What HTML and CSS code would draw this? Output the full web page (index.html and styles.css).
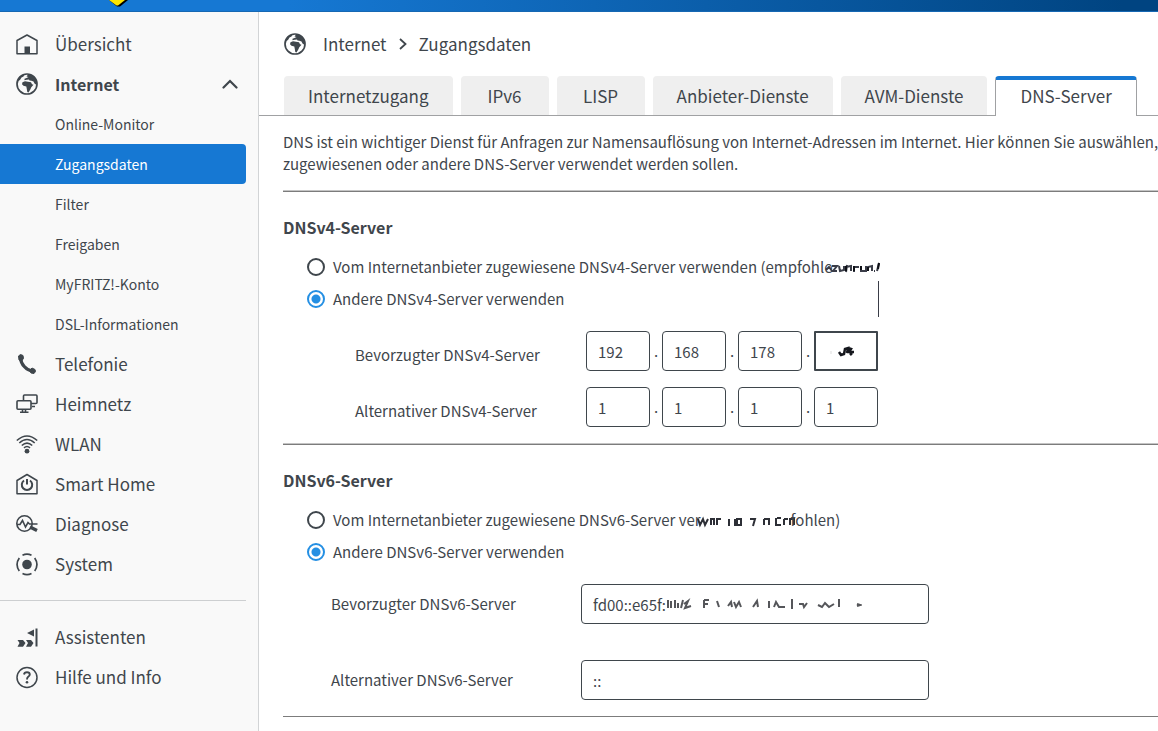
FILE: index.html
```html
<!DOCTYPE html>
<html lang="de">
<head>
<meta charset="utf-8">
<title>Zugangsdaten – DNS-Server</title>
<link rel="stylesheet" href="styles.css">
</head>
<body>
<svg class="defs" aria-hidden="true">
  <symbol id="globe" viewBox="0 0 24 24">
    <circle cx="12" cy="12" r="10" fill="none" stroke="currentColor" stroke-width="1.7"/>
    <path fill="currentColor" d="M2.500 9.500 5 4.500 9.500 2.500 8.500 4.500 6.500 5.500 5 8ZM13 2.500 17 3 20.500 6.500 22 11 21.500 13 19.500 11.500 18.500 9.500 16.500 8.800 14.500 8.600 14 7.600 11.800 7.800 9.500 8.300 9.500 6.800 11.500 6 13.500 5 11.500 4.500ZM7.500 10.200 10 9.200 13 9.800 16 10.200 17 12.300 18.500 12.700 16.300 15.200 15.300 17.500 13.500 20.500 12.300 20 11.800 17 11.300 14.500 8.500 13.800 7 12.200Z"/>
  </symbol>
</svg>
<header class="topbar">
  <svg class="logo" viewBox="0 0 24 8" aria-hidden="true"><path d="M1 0H20L12 6.500H9Z" fill="#000"/><path d="M1 0H17L10 5.500H8.500Z" fill="#ffe600"/></svg>
</header>
<div class="layout">
  <nav class="sidebar" aria-label="Hauptmenü">
    <a class="item" href="#"><svg class="icon" viewBox="0 0 24 24"><path d="M2 8.500 12 3 22 8.500V21.800H2Z" fill="none" stroke="currentColor" stroke-width="1.500" stroke-linejoin="round"/><path d="M9.500 14.500h5.500v7h-5.500z" fill="currentColor"/></svg>Übersicht</a>
    <a class="item open" href="#"><svg class="icon"><use href="#globe"/></svg>Internet<svg class="chevron" viewBox="0 0 16 10"><path d="M1.500 8.500 8 2l6.500 6.500" fill="none" stroke="currentColor" stroke-width="2.200" stroke-linecap="round"/></svg></a>
    <a class="item sub" href="#">Online-Monitor</a>
    <a class="item sub active" href="#" aria-current="page">Zugangsdaten</a>
    <a class="item sub" href="#">Filter</a>
    <a class="item sub" href="#">Freigaben</a>
    <a class="item sub" href="#">MyFRITZ!-Konto</a>
    <a class="item sub" href="#">DSL-Informationen</a>
    <a class="item" href="#"><svg class="icon" viewBox="0 0 24 24"><path d="M5.500 6C6 12 11 18.500 17.500 19" fill="none" stroke="currentColor" stroke-width="3.200"/><path d="M3.500 4 5.500 2.500 8 3.500 8.500 6.500 6.500 9 4 8ZM14.500 18.500 17 16 20 17.500 20.500 19.500 19 21.500 16 21Z" fill="currentColor" stroke="currentColor" stroke-linejoin="round"/></svg>Telefonie</a>
    <a class="item" href="#"><svg class="icon" viewBox="0 0 24 24"><g fill="none" stroke="currentColor" stroke-width="1.600"><path d="M8.500 8.500V4Q8.500 3 9.500 3H21Q22 3 22 4V10.500Q22 11.500 21 11.500H16M17 14.500h3"/><rect x="2" y="8.800" width="14" height="8.400" rx="1"/><path d="M7.500 17v3M10.500 17v3M5 20.300h8.500"/></g></svg>Heimnetz</a>
    <a class="item" href="#"><svg class="icon" viewBox="0 0 24 24"><g fill="none" stroke="currentColor" stroke-width="1.600"><path d="M1.800 8.500Q12-.5 22.200 8.500M4.300 11Q12 4 19.700 11M6.800 13.500Q12 8.800 17.200 13.500M9 15.800Q12 13.200 15 15.800"/></g><circle cx="12" cy="19.200" r="2.400" fill="currentColor"/></svg>WLAN</a>
    <a class="item" href="#"><svg class="icon" viewBox="0 0 24 24"><path d="M2 8.500 12 2.500 22 8.500V21.800H2Z" fill="none" stroke="currentColor" stroke-width="1.500" stroke-linejoin="round"/><path d="M9 8.500A5.200 5.200 0 1 0 15 8.500M12 7V12.500" fill="none" stroke="currentColor" stroke-width="2"/></svg>Smart Home</a>
    <a class="item" href="#"><svg class="icon" viewBox="0 0 24 24"><g fill="none" stroke="currentColor" stroke-width="1.600"><circle cx="9.500" cy="11.500" r="7.700"/><path d="M2 12.500H5L7.500 8.500 10.500 15 13 10.500 14.500 12H22.500"/></g><path d="M15 15 22 18.500" stroke="currentColor" stroke-width="3.400"/></svg>Diagnose</a>
    <a class="item" href="#"><svg class="icon" viewBox="0 0 24 24"><circle cx="12" cy="12.500" r="4.800" fill="currentColor"/><path d="M7.500 3.300Q12 1 16.500 3.300M7.500 21.500Q12 23.700 16.500 21.500M4.300 6Q-.2 12.500 4.300 19M19.700 6Q24.200 12.500 19.700 19" fill="none" stroke="currentColor" stroke-width="1.700"/></svg>System</a>
    <hr class="divider">
    <a class="item" href="#"><svg class="icon" viewBox="0 0 24 24"><path d="M20.500 3.500h2V21.500h-2ZM19 4.500V11.500L12 8ZM2.500 15H8L10.500 18 8 21.800H2.500L4.500 18ZM11 15H16L18.500 18 16 21.800H11L13 18Z" fill="currentColor"/></svg>Assistenten</a>
    <a class="item" href="#"><svg class="icon" viewBox="0 0 24 24"><circle cx="12" cy="12.500" r="10" fill="none" stroke="currentColor" stroke-width="1.500"/><path d="M9 9.500Q9.300 7.300 12 7.300T14.800 9.600Q14.800 10.800 13.200 11.800 12 12.700 12 14.500" fill="none" stroke="currentColor" stroke-width="1.900"/><circle cx="12" cy="17.300" r="1.300" fill="currentColor"/></svg>Hilfe und Info</a>
  </nav>
  <main class="content">
    <nav class="crumbs" aria-label="Pfad">
      <svg class="icon"><use href="#globe"/></svg>
      <a href="#">Internet</a>
      <svg class="sep" viewBox="0 0 8 12"><path d="M1 1 6.500 6 1 11" fill="none" stroke="currentColor" stroke-width="1.800"/></svg>
      <a href="#">Zugangsdaten</a>
    </nav>
    <div class="tabs" role="tablist">
      <button class="tab" role="tab">Internetzugang</button>
      <button class="tab" role="tab">IPv6</button>
      <button class="tab" role="tab">LISP</button>
      <button class="tab" role="tab">Anbieter-Dienste</button>
      <button class="tab" role="tab">AVM-Dienste</button>
      <button class="tab selected" role="tab" aria-selected="true">DNS-Server</button>
    </div>
    <form class="page">
      <p class="intro">DNS ist ein wichtiger Dienst für Anfragen zur Namensauflösung von Internet-Adressen im Internet. Hier können Sie auswählen, ob<br>zugewiesenen oder andere DNS-Server verwendet werden sollen.</p>
      <section class="block">
        <h2>DNSv4-Server</h2>
        <label class="radio"><input type="radio" name="v4"><span>Vom Internetanbieter zugewiesene DNSv4-Server verwenden (empfohle<svg class="smudge end4" viewBox="0 0 56 58"><g fill="none" stroke="#3a3d48"><path d="M2 10 5 7 8 11M8 6h5l-4 5h4M15 6l1 5 4-1V6M23 5l-1 7M22 7l5-1v5M30 6v6M30 7h5M37 6v5h5V6M44 11V7l4-1v5M50 11h1M53 11l2-8" stroke-width="2"/><path d="M22 6v5M30 6v5M37 6v4M44 7v4M55 3l-1 6" stroke="#0e1016" stroke-width="2"/><path d="M54.500 21V57"/></g></svg></span></label>
        <label class="radio"><input type="radio" name="v4" checked><span>Andere DNSv4-Server verwenden</span></label>
        <div class="row v4">
          <label for="p1">Bevorzugter DNSv4-Server</label>
          <div class="octets"><input id="p1" value="192"><span>.</span><input aria-label="Oktett 2" value="168"><span>.</span><input aria-label="Oktett 3" value="178"><span>.</span><span class="field"><input class="square" aria-label="Oktett 4"><svg class="scribble" viewBox="0 0 28 14"><path d="M9 7 11 10 14 9 15 4 18 3 17 8M18 3 21 4 19 7 24 7M20 10 22 8" fill="none" stroke="#15171d" stroke-width="2.500"/><path d="M1 6v3" stroke="#ddd"/></svg></span></div>
        </div>
        <div class="row v4">
          <label for="a1">Alternativer DNSv4-Server</label>
          <div class="octets"><input id="a1" value="1"><span>.</span><input aria-label="Oktett 2" value="1"><span>.</span><input aria-label="Oktett 3" value="1"><span>.</span><input aria-label="Oktett 4" value="1"></div>
        </div>
      </section>
      <section class="block">
        <h2>DNSv6-Server</h2>
        <label class="radio"><input type="radio" name="v6"><span>Vom Internetanbieter zugewiesene DNSv6-Server ver<svg class="smudge mid6" viewBox="0 0 98 14"><path d="M1 5 3 11 6 5 8 11 11 5M14 11V5h3v6M20 11V5h4M32 5v7M38 5v7M40 5h4v6h-4ZM53 5h5l-2 7M67 5v6M67 5h5v6M79 4v7h5M80 4h4M87 5v6M87 5h4M93 11V5h4v6" fill="none" stroke="#2d2f36" stroke-width="2"/></svg>fohlen)</span></label>
        <label class="radio"><input type="radio" name="v6" checked><span>Andere DNSv6-Server verwenden</span></label>
        <div class="row v6">
          <label for="p6">Bevorzugter DNSv6-Server</label>
          <span class="field"><input id="p6" value="fd00::e65f:"><svg class="veil" viewBox="0 0 196 14"><path d="M2 3v8M5 4v7M9 3v8M12 6v5M17 3l-2 8M18 7l4-3-3 7 6-2M38 3v8M38 3h5M38 7h4M51 4l2 6M62 9l3-4 1 5M68 5l2 5 3-5 2 5M87 10l4-6 1 6M103 4v7M108 10l2-5 3 5h6M126 2v10M133 7h4l1 3 3-4M152 8l4 2 3-4 4 4 5-3M173 2v8M191 7l3 1-3 1" fill="none" stroke="#55565a" stroke-width="2"/></svg></span>
        </div>
        <div class="row v6">
          <label for="a6">Alternativer DNSv6-Server</label>
          <span class="field"><input id="a6" value="::"></span>
        </div>
      </section>
    </form>
  </main>
</div>
</body>
</html>
```

FILE: styles.css
```css
* { box-sizing: border-box; }
body {
  margin: 0;
  min-height: 100vh;
  display: flex;
  flex-direction: column;
  overflow: hidden;
  background: #fff;
  color: #3f464c;
  font: 15px/22px "Noto Sans CJK SC", "Noto Sans", sans-serif;
}
a { color: inherit; text-decoration: none; }
.defs { display: none; }
.icon { flex: none; width: 24px; height: 24px; }

.topbar {
  height: 12px;
  padding-left: 108px;
  background: linear-gradient(90deg, #1678d3 25%, #004481 97%);
  border-bottom: 1px solid #1668b3;
}
.logo { display: block; width: 24px; height: 8px; }

.layout { flex: 1; display: flex; }
.sidebar {
  flex: none;
  width: 259px;
  padding: 12px 12px 0 0;
  background: #f9f9f9;
  border-right: 1px solid #d2d4d6;
}
.item {
  display: flex;
  align-items: center;
  gap: 16px;
  height: 40px;
  padding-left: 15px;
  padding-right: 8px;
  font-size: 17px;
}
.open { font-size: 16px; font-weight: 700; }
.chevron { width: 16px; height: 10px; margin-left: auto; }
.sub { padding-left: 55px; font-size: 14px; }
.active { background: #1678d3; color: #fff; border-radius: 0 4px 4px 0; }
.divider { margin: 16px 0; border: 0; border-top: 1px solid #cdcfd1; }

.content { flex: 1; min-width: 0; }
.crumbs {
  display: flex;
  align-items: center;
  height: 64px;
  padding-left: 24px;
  font-size: 17px;
}
.crumbs .icon { margin-right: 16px; }
.sep { width: 8px; height: 12px; margin: 0 12px; }
.tabs {
  display: flex;
  gap: 8px;
  padding-left: 25px;
  box-shadow: inset 0 -1px #a0a1a3;
}
.tab {
  min-width: 88px;
  height: 40px;
  padding: 0 24px;
  border: 0;
  border-bottom: 1px solid #a0a1a3;
  border-radius: 4px 4px 0 0;
  background: #efefef;
  color: inherit;
  font: inherit;
  font-size: 17px;
}
.selected {
  padding-bottom: 4px;
  border: 1px solid #a0a1a3;
  border-top: 4px solid #1678d3;
  border-bottom: 0;
  background: #fff;
}

.page { padding-left: 24px; white-space: nowrap; overflow: hidden; }
.intro { margin: 0; padding: 15px 0; }
.block {
  padding: 24px 0 16px;
  border-top: 1px solid #c4c4c4;
  box-shadow: inset 0 1px #7c7c7c;
}
.block:last-child { border-bottom: 1px solid #7c7c7c; }
h2 { margin: 0 0 12px; font-size: 16px; line-height: 24px; font-weight: 700; }
.radio { display: flex; align-items: center; gap: 8px; height: 32px; padding-left: 24px; }
.radio input {
  appearance: none;
  width: 18px;
  height: 18px;
  margin: 0;
  border: 2px solid #3f464c;
  border-radius: 50%;
}
.radio input:checked {
  border-color: #248fe3;
  background: radial-gradient(circle, #248fe3 4px, transparent 5px);
}
.row { display: flex; align-items: center; }
.row input {
  width: 64px;
  height: 40px;
  padding: 0 11px;
  border: 1px solid #3f464c;
  border-radius: 4px;
  background: #fff;
  color: inherit;
  font: inherit;
}
.v4 { height: 40px; margin-top: 16px; padding-left: 72px; }
.v4 > label { width: 231px; padding-top: 8px; }
.octets { display: flex; }
.octets > span:not(.field) { width: 12px; padding-top: 9px; text-align: center; }
.field { position: relative; display: flex; }
.row .square { border-width: 2px; border-radius: 1px; }
.v6 { height: 40px; margin-top: 36px; padding-left: 48px; }
.v6 > label { width: 250px; }
.v6 input { width: 348px; }
.radio + .v6 { margin-top: 16px; }

.smudge { vertical-align: top; }
.end4 { position: absolute; width: 56px; height: 58px; margin: 4px 0 0 -8px; }
.mid6 { width: 98px; height: 14px; margin: 5px -4px 0; }
.scribble { position: absolute; left: 16px; top: 14px; width: 28px; height: 14px; }
.veil { position: absolute; left: 85px; top: 13px; width: 196px; height: 14px; }
```
